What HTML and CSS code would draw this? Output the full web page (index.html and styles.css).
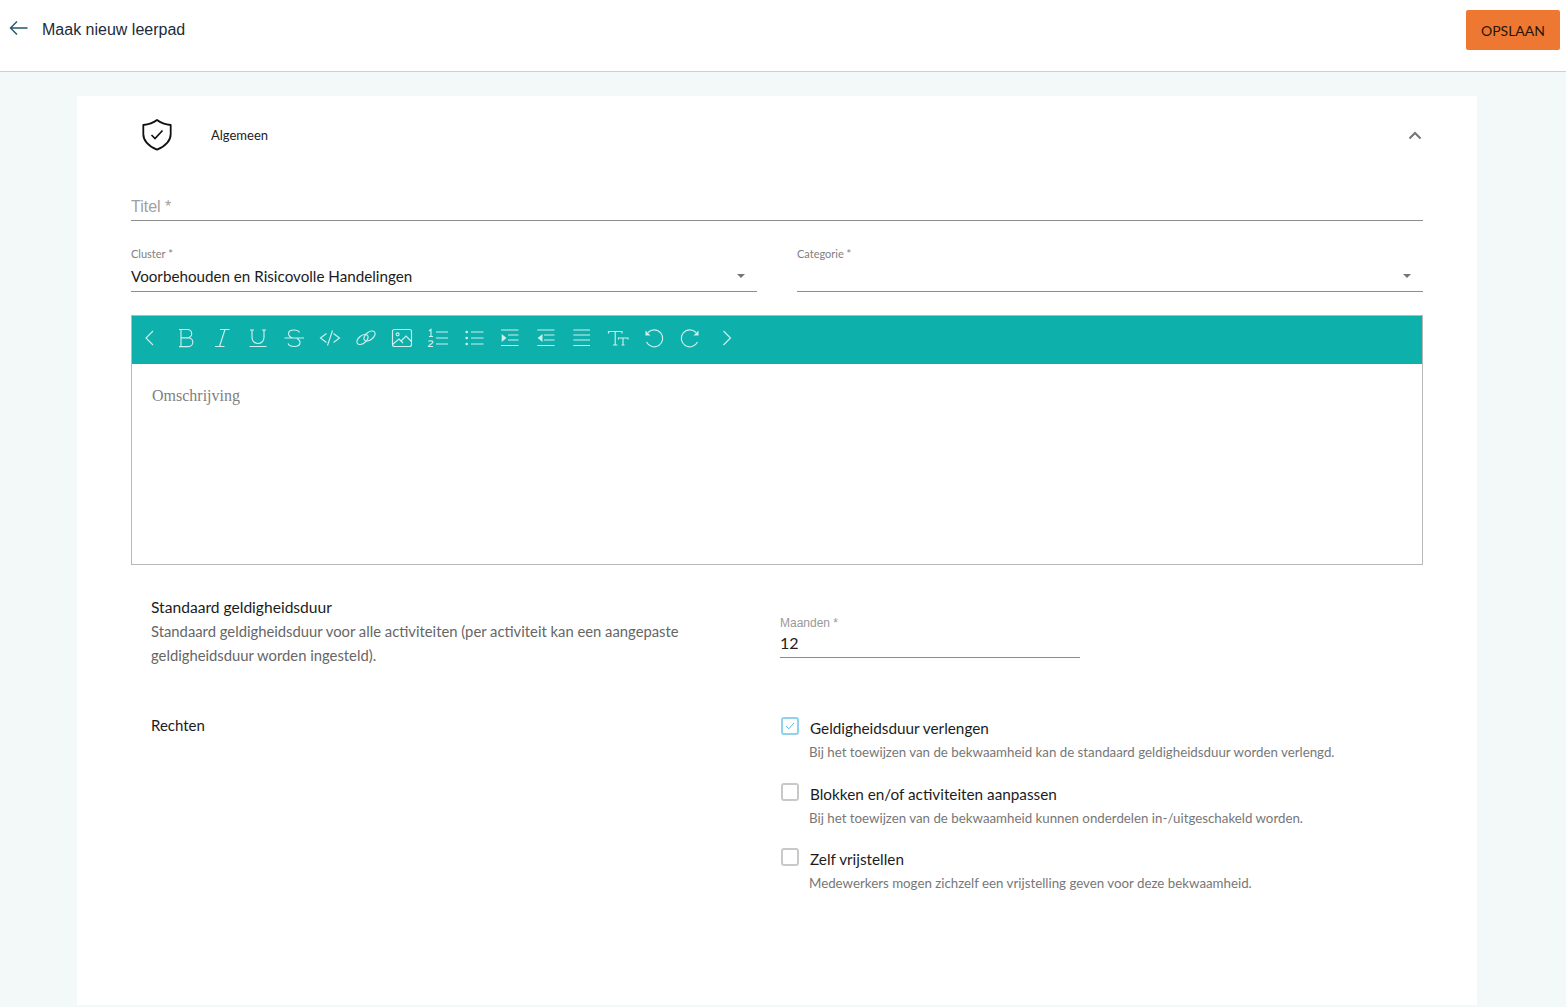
FILE: index.html
```html
<!DOCTYPE html>
<html lang="nl">
<head>
<meta charset="utf-8">
<title>Maak nieuw leerpad</title>
<link rel="stylesheet" href="styles.css">
</head>
<body>
<header class="topbar">
  <div class="topbar-left">
    <svg class="back" width="20" height="16" viewBox="0 0 20 16"><path d="M18.500 8H1.500M8 1.500 1.500 8 8 14.500" fill="none" stroke="#26566b" stroke-width="1.400"/></svg>
    <h1 class="page-title">Maak nieuw leerpad</h1>
  </div>
  <button class="save">OPSLAAN</button>
</header>
<main class="card">
  <div class="section-head">
    <svg class="shield" width="32" height="34" viewBox="0 0 32 34"><path d="M16 2C20 5 25 6.500 29.700 7V16C29.700 23.500 23.500 28.500 16 31.700 8.500 28.500 2.300 23.500 2.300 16V7C7 6.500 12 5 16 2Z" fill="none" stroke="#111" stroke-width="1.800" stroke-linejoin="round"/><path d="M10.500 17l3.500 3.500 7.500-8" fill="none" stroke="#111" stroke-width="1.700"/></svg>
    <span class="section-name">Algemeen</span>
    <svg class="chevron" width="14" height="9" viewBox="0 0 14 9"><path d="M1.500 7.500 7 2l5.500 5.500" fill="none" stroke="#757575" stroke-width="2"/></svg>
  </div>
  <div class="title-field"><span class="title-ph">Titel *</span></div>
  <div class="select-row">
    <div class="select">
      <span class="small-label">Cluster *</span>
      <div class="select-value"><span>Voorbehouden en Risicovolle Handelingen</span><i class="caret"></i></div>
    </div>
    <div class="select">
      <span class="small-label">Categorie *</span>
      <div class="select-value"><span></span><i class="caret"></i></div>
    </div>
  </div>
  <div class="editor">
    <div class="toolbar">
      <svg class="tool" viewBox="0 0 24 24"><path d="M15 5l-7 7 7 7"/></svg>
      <svg class="tool" viewBox="0 0 24 24"><path d="M5 3.500h8.500a4.200 4.200 0 0 1 0 8.400H7M7 3.500v17M7 12h7.500a4.300 4.300 0 0 1 0 8.600H5"/></svg>
      <svg class="tool" viewBox="0 0 24 24"><path d="M10 3.500h9.500M5 20.500h9.500M15 3.500 9.500 20.500"/></svg>
      <svg class="tool" viewBox="0 0 24 24"><path d="M6 4v7.500a6 6 0 0 0 12 0V4M4 4h4M16 4h4M3.500 20.500h17"/></svg>
      <svg class="tool" viewBox="0 0 24 24"><path d="M17.500 6.500c-1-2-3-2.500-5.500-2.500-3.500 0-5.500 1.500-5.500 3.500 0 2 1.500 3.500 4 4.500M2.500 12h19.500M15 12.500c2 1 3 2 3 4 0 2.500-2.500 4-6 4-3 0-5-1-6-3"/></svg>
      <svg class="tool" viewBox="0 0 24 24"><path d="M8.500 7.500 2.500 12l6 4.500M15.500 7.500l6 4.500-6 4.500M14.500 4.500 9.500 19.500"/></svg>
      <svg class="tool" viewBox="0 0 24 24"><ellipse cx="8.500" cy="13.500" rx="6.500" ry="3.800" transform="rotate(-38 8.500 13.500)"/><ellipse cx="15.500" cy="10" rx="6.500" ry="3.800" transform="rotate(-38 15.500 10)"/></svg>
      <svg class="tool" viewBox="0 0 24 24"><rect x="2.500" y="3.500" width="19" height="17" rx="2"/><circle cx="7.600" cy="8.300" r="1.500"/><path d="M2.500 18.500 9 13l4 4M11 15l5-5 5.500 5.500"/></svg>
      <svg class="tool" viewBox="0 0 24 24"><path d="M10 6h12M10 12h12M10 18h12M3 5l2-1.500V10M3 10.500h4M2.500 15.500c.5-1 4.500-1 4.500 .5 0 1.500-4.500 3-4.500 4.500H7"/></svg>
      <svg class="tool" viewBox="0 0 24 24"><path d="M9 6h12.500M9 12h12.500M9 18h12.500"/><circle class="solid" cx="4.700" cy="6" r="1.300"/><circle class="solid" cx="4.700" cy="12" r="1.300"/><circle class="solid" cx="4.700" cy="18" r="1.300"/></svg>
      <svg class="tool" viewBox="0 0 24 24"><path d="M3 4h17.500M10 9h10.500M10 14h10.500M3 19.500h17.500"/><path class="solid" d="M3.700 8 8.500 12l-4.800 4z"/></svg>
      <svg class="tool" viewBox="0 0 24 24"><path d="M3.300 4h17.200M10 9h10.500M10 14h10.500M3.300 19.500h17.200"/><path class="solid" d="M8.500 8 3.700 12l4.800 4z"/></svg>
      <svg class="tool" viewBox="0 0 24 24"><path d="M3.300 4H20M3.300 9H20M3.300 14H20M3.300 19.500H20"/></svg>
      <svg class="tool" viewBox="0 0 24 24"><path d="M2.500 7.500v-2h13.500v2M9.200 5.500V19M7 19h4.500M12.500 13.500V12H22v1.500M17 12v7M15.500 19h3"/></svg>
      <svg class="tool" viewBox="0 0 24 24"><path d="M6 6.500A8.500 8.500 0 1 1 4.500 16"/><path class="solid" d="M3.500 4.500v5h5z"/></svg>
      <svg class="tool" viewBox="0 0 24 24"><path d="M18 6.500A8.500 8.500 0 1 0 19.500 16"/><path class="solid" d="M20.500 4.500v5h-5z"/></svg>
      <svg class="tool" viewBox="0 0 24 24"><path d="M9.500 5l7 7-7 7"/></svg>
    </div>
    <div class="editor-body">Omschrijving</div>
  </div>
  <section class="validity">
    <div class="validity-text">
      <h2 class="row-title wide">Standaard geldigheidsduur</h2>
      <p class="row-desc">Standaard geldigheidsduur voor alle activiteiten (per activiteit kan een aangepaste geldigheidsduur worden ingesteld).</p>
    </div>
    <div class="months">
      <span class="months-label">Maanden *</span>
      <span class="months-value">12</span>
    </div>
  </section>
  <section class="rights">
    <h2 class="row-title rights-title">Rechten</h2>
    <div class="options">
      <div class="option">
        <span class="box checked"><svg width="12" height="10" viewBox="0 0 12 10"><path d="M2 5l2.800 2.800L10 2" fill="none" stroke="#5bb8dc" stroke-width="1"/></svg></span>
        <div><div class="opt-label">Geldigheidsduur verlengen</div><div class="opt-desc">Bij het toewijzen van de bekwaamheid kan de standaard geldigheidsduur worden verlengd.</div></div>
      </div>
      <div class="option">
        <span class="box"></span>
        <div><div class="opt-label">Blokken en/of activiteiten aanpassen</div><div class="opt-desc">Bij het toewijzen van de bekwaamheid kunnen onderdelen in-/uitgeschakeld worden.</div></div>
      </div>
      <div class="option">
        <span class="box"></span>
        <div><div class="opt-label">Zelf vrijstellen</div><div class="opt-desc">Medewerkers mogen zichzelf een vrijstelling geven voor deze bekwaamheid.</div></div>
      </div>
    </div>
  </section>
</main>
</body>
</html>
```
FILE: styles.css
```css
* { box-sizing: border-box; }
html, body { margin: 0; height: 100%; overflow: hidden; }
body { background: #f3f8f8; font-family: "Lato", "Noto Sans", sans-serif; color: #1c1c1c; }
.topbar { height: 72px; background: #fff; border-bottom: 1px solid #cfcfcf; display: flex; justify-content: space-between; padding: 10px 6px 0 9px; }
.topbar-left { display: flex; align-items: flex-start; gap: 13px; padding-top: 9px; }
.back { margin-top: 1px; }
.page-title { margin: 0; font: 400 16px/21px "Liberation Sans", sans-serif; color: #1d2b3a; }
.save { width: 94px; height: 40px; background: #ee7831; color: #2a1408; border: 0; border-radius: 2px; font: 400 14px "Lato", sans-serif; padding: 1px 0 0; }
.card { width: 1400px; height: 909px; margin: 24px 0 0 77px; background: #fff; padding: 0 54px; }
.section-head { height: 78px; display: flex; align-items: center; padding: 0 1px 0 10px; }
.section-name { margin-left: 38px; font-size: 13px; color: #222; }
.chevron { margin-left: auto; }
.title-field { height: 47px; border-bottom: 1px solid #8c8c8c; padding-top: 22px; }
.title-ph { font: 16px/20px "Liberation Sans", sans-serif; color: #a0a0a0; }
.select-row { display: flex; gap: 40px; margin-top: 26px; }
.select { flex: 1; height: 45px; display: flex; flex-direction: column; }
.small-label { font-size: 11px; line-height: 13px; color: #808080; }
.select-value { flex: 1; border-bottom: 1px solid #8c8c8c; display: flex; justify-content: space-between; align-items: center; font-size: 15.200px; padding-right: 12px; }
.caret { width: 0; height: 0; border: 4.500px solid transparent; border-top: 4.500px solid #757575; border-bottom: 0; }
.editor { height: 250px; margin-top: 23px; border: 1px solid #b8b8b8; }
.toolbar { height: 48px; background: #0eb0ab; display: flex; align-items: center; gap: 12px; padding: 0 0 4px 6px; }
.tool { width: 24px; height: 24px; flex: none; fill: none; stroke: #cdefed; stroke-width: 1.150; }
.tool .solid { fill: #cdefed; stroke: none; }
.editor-body { padding: 23px 20px; font: 16px/18px "Liberation Serif", serif; color: #808080; }
.validity { display: flex; margin-top: 30px; height: 95px; padding-left: 20px; }
.validity-text { width: 629px; }
.row-title { margin: 0; font-size: 15px; line-height: 24px; font-weight: 400; color: #1c1c1c; }
.row-title.wide { font-size: 15.600px; }
.row-desc { margin: 0; width: 560px; font-size: 14.800px; line-height: 24px; font-weight: 400; color: #666; }
.months { width: 300px; height: 43px; margin-top: 20px; border-bottom: 1px solid #8c8c8c; display: flex; flex-direction: column; padding-top: 1px; }
.months-label { font: 12px/14px "Liberation Sans", sans-serif; color: #999; }
.months-value { font-size: 16px; line-height: 26px; color: #222; }
.rights { display: flex; margin-top: 24px; padding-left: 20px; }
.rights-title { width: 630px; margin-top: -1px; }
.options { display: flex; flex-direction: column; gap: 16.500px; }
.option { display: flex; gap: 11px; }
.box { width: 18px; height: 18px; margin-top: 3px; border: 2px solid #c9c9c9; border-radius: 3px; flex: none; display: flex; align-items: center; justify-content: center; }
.box.checked { border-color: #8fd2ea; }
.opt-label { font-size: 15.300px; line-height: 24px; color: #1c1c1c; padding-top: 2px; }
.opt-desc { margin: 1px 0 0 -1px; font-size: 13.300px; line-height: 22px; font-weight: 400; color: #777; }
```
